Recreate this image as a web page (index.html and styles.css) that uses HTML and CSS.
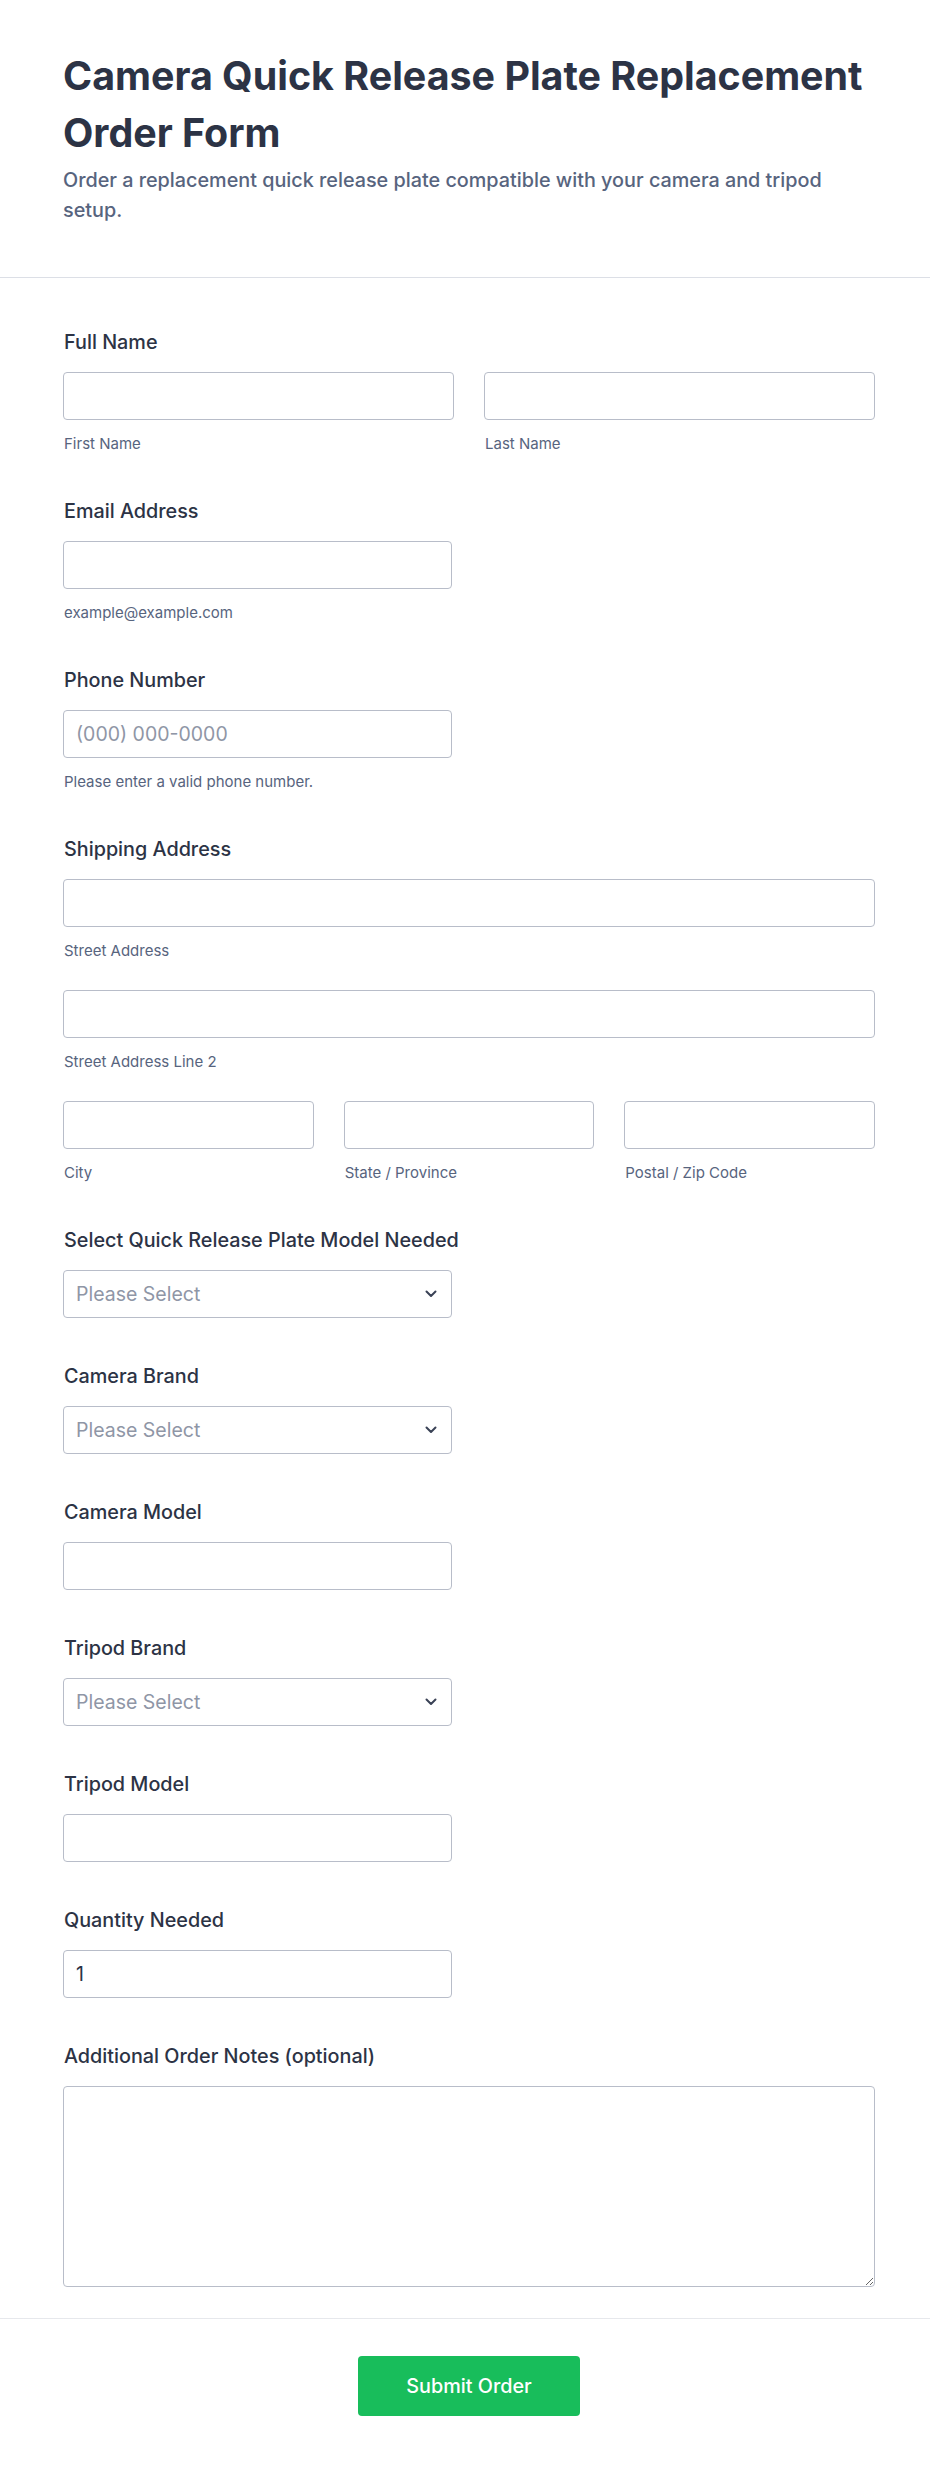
FILE: index.html
```html
<!DOCTYPE html>
<html lang="en">
<head>
<meta charset="utf-8">
<title>Camera Quick Release Plate Replacement Order Form</title>
<link rel="stylesheet" href="styles.css">
</head>
<body>
<div class="page">
  <header class="header">
    <h1 class="title">Camera Quick Release Plate Replacement Order Form</h1>
    <p class="subtitle">Order a replacement quick release plate compatible with your camera and tripod setup.</p>
  </header>

  <form class="form-body">
    <div class="field">
      <label class="label">Full Name</label>
      <div class="row2">
        <div class="sub">
          <input class="input" type="text">
          <span class="sublabel">First Name</span>
        </div>
        <div class="sub">
          <input class="input" type="text">
          <span class="sublabel">Last Name</span>
        </div>
      </div>
    </div>

    <div class="field">
      <label class="label">Email Address</label>
      <div class="half">
        <input class="input" type="email">
        <span class="sublabel">example@example.com</span>
      </div>
    </div>

    <div class="field">
      <label class="label">Phone Number</label>
      <div class="half">
        <input class="input" type="tel" placeholder="(000) 000-0000">
        <span class="sublabel">Please enter a valid phone number.</span>
      </div>
    </div>

    <div class="field">
      <label class="label">Shipping Address</label>
      <div class="addr-line">
        <input class="input" type="text">
        <span class="sublabel">Street Address</span>
      </div>
      <div class="addr-line">
        <input class="input" type="text">
        <span class="sublabel">Street Address Line 2</span>
      </div>
      <div class="row3">
        <div class="sub">
          <input class="input" type="text">
          <span class="sublabel">City</span>
        </div>
        <div class="sub">
          <input class="input" type="text">
          <span class="sublabel">State / Province</span>
        </div>
        <div class="sub">
          <input class="input" type="text">
          <span class="sublabel">Postal / Zip Code</span>
        </div>
      </div>
    </div>

    <div class="field">
      <label class="label">Select Quick Release Plate Model Needed</label>
      <div class="half select-wrap">
        <select class="input select"><option>Please Select</option></select>
        <svg class="chevron" width="12" height="8" viewBox="0 0 12 8"><path d="M1.5 1.5 6 6l4.5-4.5" fill="none" stroke="#3a4256" stroke-width="2" stroke-linecap="round" stroke-linejoin="round"/></svg>
      </div>
    </div>

    <div class="field">
      <label class="label">Camera Brand</label>
      <div class="half select-wrap">
        <select class="input select"><option>Please Select</option></select>
        <svg class="chevron" width="12" height="8" viewBox="0 0 12 8"><path d="M1.5 1.5 6 6l4.5-4.5" fill="none" stroke="#3a4256" stroke-width="2" stroke-linecap="round" stroke-linejoin="round"/></svg>
      </div>
    </div>

    <div class="field">
      <label class="label">Camera Model</label>
      <div class="half">
        <input class="input" type="text">
      </div>
    </div>

    <div class="field">
      <label class="label">Tripod Brand</label>
      <div class="half select-wrap">
        <select class="input select"><option>Please Select</option></select>
        <svg class="chevron" width="12" height="8" viewBox="0 0 12 8"><path d="M1.5 1.5 6 6l4.5-4.5" fill="none" stroke="#3a4256" stroke-width="2" stroke-linecap="round" stroke-linejoin="round"/></svg>
      </div>
    </div>

    <div class="field">
      <label class="label">Tripod Model</label>
      <div class="half">
        <input class="input" type="text">
      </div>
    </div>

    <div class="field">
      <label class="label">Quantity Needed</label>
      <div class="half">
        <input class="input" type="text" value="1">
      </div>
    </div>

    <div class="field">
      <label class="label">Additional Order Notes (optional)</label>
      <textarea class="input textarea"></textarea>
    </div>
  </form>

  <footer class="footer">
    <button class="submit" type="button">Submit Order</button>
  </footer>
</div>
</body>
</html>
```
FILE: styles.css
```css
* { box-sizing: border-box; }

html, body {
  margin: 0;
  padding: 0;
  background: #ffffff;
}

body {
  font-family: Inter, "Noto Sans", "Liberation Sans", sans-serif;
  color: #2c3345;
}

.header {
  padding: 48px 55px 52px 63px;
  border-bottom: 1px solid #dcdfe6;
}

.title {
  margin: 0;
  font-size: 39.4px;
  line-height: 57px;
  font-weight: 700;
  color: #2c3345;
}

.subtitle {
  margin: 3px 0 0;
  font-size: 19.8px;
  line-height: 30px;
  font-weight: 500;
  color: #57647e;
}

.form-body {
  padding: 52px 55px 31px 63px;
}

.field {
  margin-bottom: 46px;
}

.field:last-child {
  margin-bottom: 0;
}

.label {
  display: block;
  font-size: 19.8px;
  line-height: 24px;
  font-weight: 500;
  color: #2c3345;
  margin: 0 0 18px 1px;
}

.input {
  display: block;
  width: 100%;
  height: 48px;
  margin: 0;
  padding: 0 12px;
  border: 1px solid #b8bdc9;
  border-radius: 4px;
  background: #ffffff;
  font-family: inherit;
  font-size: 19.5px;
  color: #2c3345;
  outline: none;
}

.input::placeholder {
  color: #8f96a6;
  opacity: 1;
}

.sublabel {
  display: block;
  margin: 15px 0 0 1px;
  font-size: 15px;
  line-height: 18px;
  color: #57647e;
}

.row2 {
  display: grid;
  grid-template-columns: 1fr 1fr;
  column-gap: 30px;
}

.row3 {
  display: grid;
  grid-template-columns: 1fr 1fr 1fr;
  column-gap: 30px;
}

.half {
  width: 389px;
}

.addr-line {
  margin-bottom: 30px;
}

.select-wrap {
  position: relative;
}

.select {
  appearance: none;
  -webkit-appearance: none;
  color: #8f96a6;
  padding-right: 36px;
}

.chevron {
  position: absolute;
  right: 15px;
  top: 20px;
  pointer-events: none;
}

.textarea {
  height: 201px;
  padding: 12px;
  resize: vertical;
}

.footer {
  display: flex;
  justify-content: center;
  padding: 37px 55px 49px 63px;
  border-top: 1px solid #e6e8ec;
}

.submit {
  width: 222px;
  height: 60px;
  border: none;
  border-radius: 4px;
  background: #18bd5b;
  color: #ffffff;
  font-family: inherit;
  font-size: 19.8px;
  font-weight: 500;
  cursor: pointer;
}
```
